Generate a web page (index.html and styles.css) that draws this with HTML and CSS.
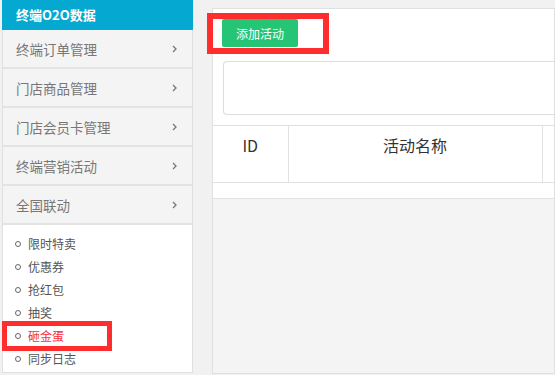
FILE: index.html
```html
<!DOCTYPE html>
<html lang="zh-CN">

<head>
  <meta charset="UTF-8" />
  <meta name="viewport" content="width=device-width, initial-scale=1.0" />
  <title>终端O2O数据 - 砸金蛋</title>
  <link rel="stylesheet" href="styles.css">
</head>

<body>
  <div class="app">
    <aside class="sidebar">
      <div class="brand">终端O2O数据</div>
      <ul class="menu">
        <li class="menu-item">终端订单管理<svg class="chev" width="5" height="8" viewBox="0 0 5 8"><polyline points="1,1 4,4 1,7" /></svg></li>
        <li class="menu-item">门店商品管理<svg class="chev" width="5" height="8" viewBox="0 0 5 8"><polyline points="1,1 4,4 1,7" /></svg></li>
        <li class="menu-item">门店会员卡管理<svg class="chev" width="5" height="8" viewBox="0 0 5 8"><polyline points="1,1 4,4 1,7" /></svg></li>
        <li class="menu-item">终端营销活动<svg class="chev" width="5" height="8" viewBox="0 0 5 8"><polyline points="1,1 4,4 1,7" /></svg></li>
        <li class="menu-item">全国联动<svg class="chev" width="5" height="8" viewBox="0 0 5 8"><polyline points="1,1 4,4 1,7" /></svg></li>
      </ul>
      <ul class="submenu">
        <li>限时特卖</li>
        <li>优惠券</li>
        <li>抢红包</li>
        <li>抽奖</li>
        <li class="active">砸金蛋</li>
        <li>同步日志</li>
      </ul>
    </aside>

    <main class="main">
      <div class="content">
        <div class="panel">
          <div class="toolbar">
            <button class="btn-add">添加活动</button>
          </div>
          <div class="search">
            <!-- filters go here -->
          </div>
        </div>
        <table class="grid">
          <colgroup>
            <col class="col-id">
            <col class="col-name">
            <col>
          </colgroup>
          <thead>
            <tr>
              <th>ID</th>
              <th>活动名称</th>
              <th></th>
            </tr>
          </thead>
          <tbody>
            <tr>
              <td colspan="3"></td>
            </tr>
          </tbody>
        </table>
      </div>
    </main>
  </div>
</body>

</html>
```

FILE: styles.css
```css
*,
*::before,
*::after {
  box-sizing: border-box;
}

body {
  margin: 0;
  background: #f1f1f1;
  font-family: "Noto Sans CJK SC", "Noto Sans", sans-serif;
  color: #333;
}

ul {
  list-style: none;
  padding: 0;
  margin: 0;
}

.app {
  display: flex;
  height: 375px;
}

/* sidebar */

.sidebar {
  display: flex;
  flex-direction: column;
  width: 191px;
  height: 373px;
  margin-left: 2px;
}

.brand {
  height: 30px;
  line-height: 30px;
  padding-left: 14px;
  background: #04a8d1;
  color: #fff;
  font-size: 13px;
  font-weight: bold;
}

.menu {
  border-left: 1px solid #e0e0e0;
  border-right: 1px solid #e0e0e0;
}

.menu-item {
  display: flex;
  align-items: center;
  justify-content: space-between;
  height: 39px;
  padding: 0 15px 0 13px;
  background: #f4f4f4;
  border-bottom: 2px solid #e3e3e3;
  color: #777;
  font-size: 13.5px;
}

.chev polyline {
  fill: none;
  stroke: #777;
  stroke-width: 1.3;
}

.submenu {
  flex: 1;
  padding-top: 7px;
  background: #fff;
  border: 1px solid #e0e0e0;
  border-top: none;
}

.submenu li {
  position: relative;
  display: flex;
  align-items: center;
  height: 23px;
  font-size: 12px;
  color: #555;
}

.submenu li::before {
  content: '';
  width: 6px;
  height: 6px;
  margin: 0 7px 0 12px;
  border: 1px solid #666;
  border-radius: 50%;
}

.submenu li.active {
  color: #ff2d3a;
}

.submenu li.active::after {
  content: '';
  position: absolute;
  left: -1px;
  top: -3px;
  width: 110px;
  height: 30px;
  border: 5px solid #ff2d2d;
}

/* main area */

.main {
  flex: 1;
  padding: 8px 0 1px 19px;
}

.content {
  display: flex;
  flex-direction: column;
  height: 100%;
  background: #f4f4f4;
  border: 1px solid #e0e0e0;
}

.panel {
  padding: 10px 9px 10px 9px;
  background: #fff;
  border-bottom: 1px solid #e0e0e0;
}

.btn-add {
  position: relative;
  width: 76px;
  height: 28px;
  border: none;
  border-radius: 2px;
  background: #25c575;
  color: #fff;
  font-family: inherit;
  font-size: 12px;
}

.btn-add::after {
  content: '';
  position: absolute;
  left: -15px;
  right: -31px;
  top: -6px;
  bottom: -7px;
  border: 6px solid #ff2d2d;
}

.search {
  height: 54px;
  margin: 14px -9px 0 1px;
  border: 1px solid #ddd;
  border-right: none;
  border-radius: 4px 0 0 4px;
}

.grid {
  width: 100%;
  table-layout: fixed;
  border-collapse: collapse;
  background: #fff;
}

.col-id {
  width: 75px;
}

.col-name {
  width: 254px;
}

.grid th {
  height: 56px;
  padding: 9px 0 0;
  vertical-align: top;
  border-right: 1px solid #e2e2e2;
  border-bottom: 1px solid #e2e2e2;
  font-size: 16px;
  font-weight: normal;
  line-height: 20px;
  color: #333;
}

.grid th:last-child {
  border-right: none;
}

.grid td {
  height: 16px;
  padding: 0;
  border-bottom: 1px solid #e2e2e2;
}
```
